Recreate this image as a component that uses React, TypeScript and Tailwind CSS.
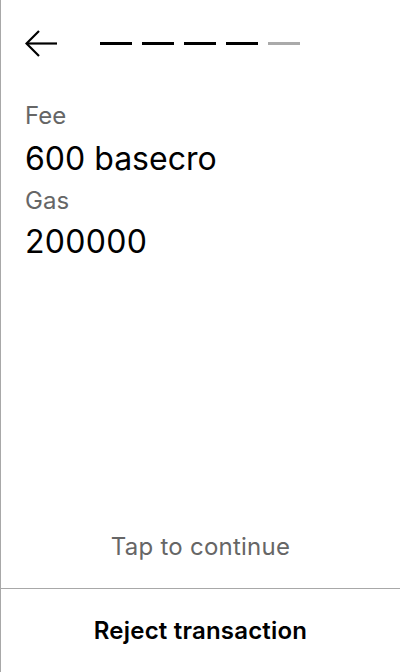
import React from 'react';

const steps = [true, true, true, true, false];

export default function App() {
  return (
    <div
      className="flex h-[672px] w-[400px] flex-col border-l border-[#a8a8a8] bg-white text-black"
      style={{ fontFamily: 'Inter, "Noto Sans", sans-serif' }}
    >
      <div className="flex h-[86px] items-center pl-[24px] pr-6 pt-[1px]">
        <button className="flex h-[30px] w-[34px] items-center">
          <svg width="34" height="30" viewBox="0 0 34 30" fill="none" stroke="black" strokeWidth="2.2">
            <path d="M32 14.5H2" />
            <path d="M14 2L1.5 14.5L14 27" />
          </svg>
        </button>
        <div className="ml-[41px] flex gap-[10px]">
          {steps.map((done, i) => (
            <div
              key={i}
              className={done ? 'h-[3.5px] w-[32px] bg-black' : 'h-[3.5px] w-[32px] bg-[#aaaaaa]'}
            />
          ))}
        </div>
      </div>

      <div className="flex flex-col px-[24px] pt-[16px]">
        <div className="text-[24px] leading-[28px] text-[#666666]">Fee</div>
        <div className="mt-[9px] text-[32px] leading-[40px]">600 basecro</div>
        <div className="mt-[8px] text-[24px] leading-[28px] text-[#666666]">Gas</div>
        <div className="mt-[7px] text-[32px] leading-[40px] tracking-[0.3px]">200000</div>
      </div>

      <div className="flex-1" />

      <div className="pb-[27px] text-center text-[24px] leading-[28px] tracking-[0.25px] text-[#666666]">
        Tap to continue
      </div>
      <div className="flex h-[84px] items-center justify-center border-t border-[#a8a8a8]">
        <span className="text-[24px] font-semibold leading-[28px] tracking-[0.2px]">Reject transaction</span>
      </div>
    </div>
  );
}
